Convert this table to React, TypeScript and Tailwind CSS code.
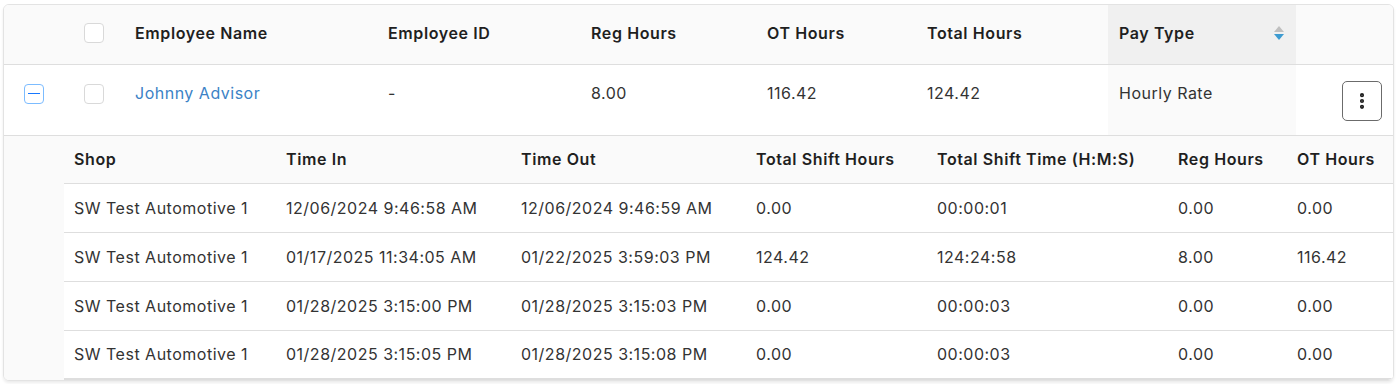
import { EllipsisVertical } from 'lucide-react';

const shifts = [
  { shop: 'SW Test Automotive 1', timeIn: '12/06/2024 9:46:58 AM', timeOut: '12/06/2024 9:46:59 AM', total: '0.00', time: '00:00:01', reg: '0.00', ot: '0.00' },
  { shop: 'SW Test Automotive 1', timeIn: '01/17/2025 11:34:05 AM', timeOut: '01/22/2025 3:59:03 PM', total: '124.42', time: '124:24:58', reg: '8.00', ot: '116.42' },
  { shop: 'SW Test Automotive 1', timeIn: '01/28/2025 3:15:00 PM', timeOut: '01/28/2025 3:15:03 PM', total: '0.00', time: '00:00:03', reg: '0.00', ot: '0.00' },
  { shop: 'SW Test Automotive 1', timeIn: '01/28/2025 3:15:05 PM', timeOut: '01/28/2025 3:15:08 PM', total: '0.00', time: '00:00:03', reg: '0.00', ot: '0.00' },
];

function Checkbox() {
  return <span className="block h-5 w-5 rounded-[4px] border border-[#d9d9d9] bg-white" />;
}

function SortIcon() {
  return (
    <span className="flex flex-col items-center gap-[2px]">
      <svg width="10" height="6" viewBox="0 0 10 6">
        <path d="M5 0 L10 6 L0 6 Z" fill="#bfbfbf" />
      </svg>
      <svg width="10" height="6" viewBox="0 0 10 6">
        <path d="M0 0 L10 0 L5 6 Z" fill="#3d9bd1" />
      </svg>
    </span>
  );
}

export default function App() {
  const head = 'px-[11px] text-left font-semibold tracking-[0.6px] text-[#1f1f1f]';
  const subHead = 'px-[10px] text-left font-semibold tracking-[0.6px] text-[#1f1f1f]';
  const subCell = 'px-[10px] text-[#333]';
  const cell = 'px-[11px] pt-4 align-top leading-[24px]';

  return (
    <div className="min-h-screen bg-white pt-[4px] px-[3px] font-['Inter',sans-serif] text-[16px] tracking-[0.5px]">
      <div className="overflow-hidden rounded-[6px] border border-[#e3e3e3] shadow-[0_2px_3px_rgba(0,0,0,0.08)]">
        <table className="w-full table-fixed border-collapse">
          <colgroup>
            <col className="w-[60px]" />
            <col className="w-[60px]" />
            <col className="w-[253px]" />
            <col className="w-[203px]" />
            <col className="w-[176px]" />
            <col className="w-[160px]" />
            <col className="w-[192px]" />
            <col className="w-[188px]" />
            <col />
          </colgroup>
          <thead>
            <tr className="h-[59px] border-b border-[#dedede] bg-[#fafafa]">
              <th className="pb-[2px]" />
              <th className="px-5 pb-[2px]">
                <Checkbox />
              </th>
              <th className={`${head} pb-[2px]`}>Employee Name</th>
              <th className={`${head} pb-[2px]`}>Employee ID</th>
              <th className={`${head} pb-[2px]`}>Reg Hours</th>
              <th className={`${head} pb-[2px]`}>OT Hours</th>
              <th className={`${head} pb-[2px]`}>Total Hours</th>
              <th className={`${head} bg-[#f0f0f0] pb-[2px]`}>
                <div className="flex items-center justify-between pr-[1px]">
                  <span>Pay Type</span>
                  <SortIcon />
                </div>
              </th>
              <th />
            </tr>
          </thead>
          <tbody>
            <tr className="h-[71px] border-b border-[#dedede] bg-white text-[#333]">
              <td className="px-5 pt-[19px] align-top">
                <span className="flex h-5 w-5 items-center justify-center rounded-[4px] border-[1.5px] border-[#7cbcff]">
                  <span className="block h-[1.5px] w-[12px] bg-[#1677ff]" />
                </span>
              </td>
              <td className="px-5 pt-[19px] align-top">
                <Checkbox />
              </td>
              <td className={`${cell} text-[#3b82c6]`}>Johnny Advisor</td>
              <td className={cell}>-</td>
              <td className={cell}>8.00</td>
              <td className={cell}>116.42</td>
              <td className={cell}>124.42</td>
              <td className={`${cell} bg-[#fafafa]`}>Hourly Rate</td>
              <td className="px-[11px] pt-4 pb-[14px] align-top">
                <div className="flex justify-end">
                  <button className="flex h-10 w-10 items-center justify-center rounded-[5px] border border-[#6b6b6b] bg-white text-[#1f1f1f]">
                    <EllipsisVertical size={20} strokeWidth={3} />
                  </button>
                </div>
              </td>
            </tr>
            <tr className="bg-[#fafafa]">
              <td colSpan={9} className="p-0 pl-[60px]">
                <table className="w-full table-fixed border-collapse">
                  <colgroup>
                    <col className="w-[212px]" />
                    <col className="w-[235px]" />
                    <col className="w-[235px]" />
                    <col className="w-[181px]" />
                    <col className="w-[241px]" />
                    <col className="w-[119px]" />
                    <col />
                  </colgroup>
                  <thead>
                    <tr className="h-[48px] border-b border-[#dedede] bg-[#fafafa]">
                      <th className={subHead}>Shop</th>
                      <th className={subHead}>Time In</th>
                      <th className={subHead}>Time Out</th>
                      <th className={subHead}>Total Shift Hours</th>
                      <th className={subHead}>Total Shift Time (H:M:S)</th>
                      <th className={subHead}>Reg Hours</th>
                      <th className={subHead}>OT Hours</th>
                    </tr>
                  </thead>
                  <tbody>
                    {shifts.map((s, i) => (
                      <tr key={i} className="h-[49px] border-b border-[#dedede] bg-white last:h-[48px] last:border-b-2">
                        <td className={subCell}>{s.shop}</td>
                        <td className={subCell}>{s.timeIn}</td>
                        <td className={subCell}>{s.timeOut}</td>
                        <td className={subCell}>{s.total}</td>
                        <td className={subCell}>{s.time}</td>
                        <td className={subCell}>{s.reg}</td>
                        <td className={subCell}>{s.ot}</td>
                      </tr>
                    ))}
                  </tbody>
                </table>
              </td>
            </tr>
          </tbody>
        </table>
      </div>
    </div>
  );
}
